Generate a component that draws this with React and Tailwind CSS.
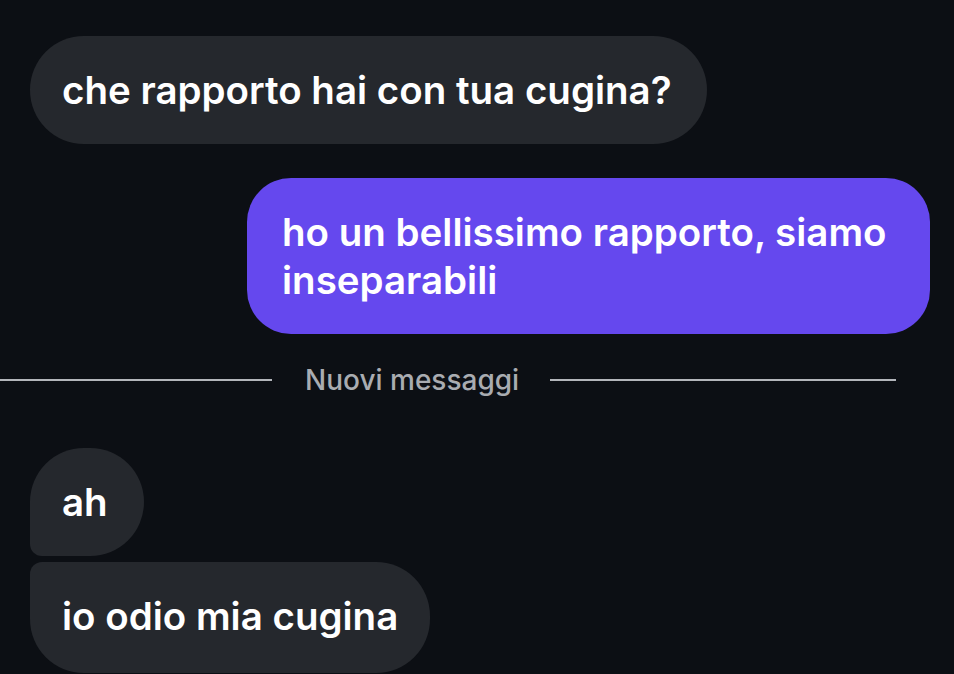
import React from 'react'

const font = { fontFamily: 'Inter, "Noto Sans", sans-serif' }

function Bubble({ children, className = '' }) {
  return (
    <div
      className={`py-[30px] px-[32px] text-[38.5px] leading-[48px] font-semibold text-white ${className}`}
    >
      {children}
    </div>
  )
}

export default function App() {
  return (
    <div
      className="w-[954px] h-[674px] overflow-hidden bg-[#0c0f14] flex flex-col pt-[36px]"
      style={font}
    >
      {/* Incoming */}
      <div className="pl-[30px] flex">
        <Bubble className="bg-[#25282d] rounded-[54px] pr-[35px]">che rapporto hai con tua cugina?</Bubble>
      </div>

      {/* Outgoing */}
      <div className="mt-[34px] pr-[24px] flex justify-end">
        <Bubble className="bg-[#6548ee] rounded-[44px] w-[683px] pl-[35px]">
          ho un bellissimo rapporto, siamo inseparabili
        </Bubble>
      </div>

      {/* New messages divider */}
      <div className="mt-[34px] h-[24px] flex items-center">
        <div className="w-[272px] h-[2px] bg-[#b3b6bb]" />
        <span className="ml-[33px] mr-[31px] text-[28px] leading-[24px] font-medium text-[#a9acb1]">
          Nuovi messaggi
        </span>
        <div className="w-[346px] h-[2px] bg-[#b3b6bb]" />
      </div>

      {/* Incoming group */}
      <div className="mt-[56px] pl-[30px] flex flex-col items-start gap-[6px]">
        <Bubble className="bg-[#25282d] rounded-[54px] rounded-bl-[12px] pr-[36px]">ah</Bubble>
        <Bubble className="bg-[#25282d] rounded-[54px] rounded-tl-[12px] pb-[33px]">io odio mia cugina</Bubble>
      </div>
    </div>
  )
}
